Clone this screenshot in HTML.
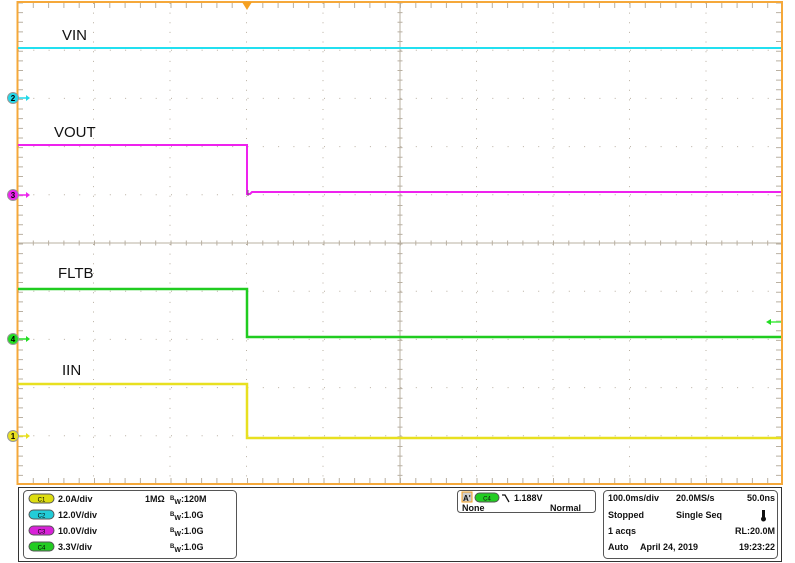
<!DOCTYPE html>
<html><head><meta charset="utf-8"><style>
body{margin:0;width:795px;height:563px;background:#fff;overflow:hidden;font-family:"Liberation Sans",Arial,sans-serif}
</style></head><body>
<svg width="795" height="563" viewBox="0 0 795 563" xmlns="http://www.w3.org/2000/svg" style="position:absolute;left:0;top:0">
<rect width="795" height="563" fill="#fff"/>
<g stroke="#b9b0a2" stroke-width="1">
 <!-- vertical dotted grid -->
 <g stroke-dasharray="1 8.64" stroke-dashoffset="-1">
  <line x1="93.5" y1="2" x2="93.5" y2="484"/><line x1="170" y1="2" x2="170" y2="484"/>
  <line x1="246.5" y1="2" x2="246.5" y2="484"/><line x1="323" y1="2" x2="323" y2="484"/>
  <line x1="476.5" y1="2" x2="476.5" y2="484"/><line x1="553" y1="2" x2="553" y2="484"/>
  <line x1="629.5" y1="2" x2="629.5" y2="484"/><line x1="706" y1="2" x2="706" y2="484"/>
 </g>
 <g stroke-dasharray="1 14.3" stroke-dashoffset="-1">
  <line x1="17" y1="50.2" x2="782" y2="50.2"/><line x1="17" y1="98.4" x2="782" y2="98.4"/>
  <line x1="17" y1="146.6" x2="782" y2="146.6"/><line x1="17" y1="194.8" x2="782" y2="194.8"/>
  <line x1="17" y1="291.2" x2="782" y2="291.2"/><line x1="17" y1="339.4" x2="782" y2="339.4"/>
  <line x1="17" y1="387.6" x2="782" y2="387.6"/><line x1="17" y1="435.8" x2="782" y2="435.8"/>
 </g>
 <!-- center lines -->
 <line x1="17" y1="243" x2="782" y2="243"/>
 <line x1="400" y1="2" x2="400" y2="484"/>
 <line x1="17" y1="243" x2="782" y2="243" stroke-width="5" stroke-dasharray="1 14.3" stroke-dashoffset="-0.5"/>
 <line x1="400" y1="2" x2="400" y2="484" stroke-width="5" stroke-dasharray="1 8.64" stroke-dashoffset="-0.5"/>
 <!-- border ticks -->
 <line x1="17" y1="5" x2="782" y2="5" stroke-width="6" stroke-dasharray="1 14.3" stroke-dashoffset="-0.5"/>
 <line x1="17" y1="481" x2="782" y2="481" stroke-width="6" stroke-dasharray="1 14.3" stroke-dashoffset="-0.5"/>
 <line x1="20" y1="2" x2="20" y2="484" stroke-width="6" stroke-dasharray="1 8.64" stroke-dashoffset="-0.5"/>
 <line x1="779" y1="2" x2="779" y2="484" stroke-width="6" stroke-dasharray="1 8.64" stroke-dashoffset="-0.5"/>
</g>
<rect x="17.5" y="2" width="764.5" height="482" fill="none" stroke="#f5a83a" stroke-width="2"/>
<polygon points="242,2 252,2 247,10" fill="#f5a020"/>
<!-- traces -->
<line x1="18" y1="48" x2="781" y2="48" stroke="#22e0f0" stroke-width="2"/>
<polyline points="18,145 247,145 247,194 250,194 252,192 781,192" fill="none" stroke="#ee22ee" stroke-width="2"/>
<polyline points="18,289 247,289 247,337 781,337" fill="none" stroke="#20cc20" stroke-width="2.5"/>
<polyline points="18,384 247,384 247,438 781,438" fill="none" stroke="#e8e020" stroke-width="2.5"/>
<line x1="248" y1="190" x2="248" y2="196" stroke="#7a4a7a" stroke-width="1"/>
<!-- labels -->
<g font-size="15" fill="#111" font-family="Liberation Sans, Arial, sans-serif">
 <text x="62" y="40">VIN</text><text x="54" y="137">VOUT</text>
 <text x="58" y="278">FLTB</text><text x="62" y="375">IIN</text>
</g>
<!-- markers -->
<g font-size="8" font-weight="bold" text-anchor="middle">
 <line x1="18" y1="98" x2="28" y2="98" stroke="#22d8e8" stroke-width="1.5"/><polygon points="26,95 30,98 26,101" fill="#22d8e8"/>
 <circle cx="13" cy="98" r="5.5" fill="#22d8e8" stroke="#999"/><text x="13" y="101">2</text>
 <line x1="18" y1="195" x2="28" y2="195" stroke="#ee22ee" stroke-width="1.5"/><polygon points="26,192 30,195 26,198" fill="#ee22ee"/>
 <circle cx="13" cy="195" r="5.5" fill="#ee22ee" stroke="#999"/><text x="13" y="198">3</text>
 <line x1="18" y1="339" x2="28" y2="339" stroke="#22dd22" stroke-width="1.5"/><polygon points="26,336 30,339 26,342" fill="#22dd22"/>
 <circle cx="13" cy="339" r="5.5" fill="#22dd22" stroke="#999"/><text x="13" y="342">4</text>
 <line x1="18" y1="436" x2="28" y2="436" stroke="#e8e020" stroke-width="1.5"/><polygon points="26,433 30,436 26,439" fill="#e8e020"/>
 <circle cx="13" cy="436" r="5.5" fill="#e8e020" stroke="#999"/><text x="13" y="439">1</text>
</g>
<line x1="768" y1="322" x2="781" y2="322" stroke="#44ee44" stroke-width="1.5"/><polygon points="766,322 771,319 771,325" fill="#22dd22"/>
<!-- bottom panel -->
<rect x="18.5" y="487.5" width="763" height="74" fill="#fff" stroke="#333" stroke-width="1"/>
<rect x="23.5" y="490.5" width="213" height="68" rx="4" fill="#fff" stroke="#555"/>
<rect x="457.5" y="490.5" width="138" height="22" rx="3" fill="#fff" stroke="#555"/>
<rect x="603.5" y="490.5" width="174" height="68" rx="4" fill="#fff" stroke="#555"/>
<g font-size="8">
 <rect x="29" y="494" width="25" height="9" rx="4.5" fill="#dddd10" stroke="#555"/><text x="41.5" y="501.5" text-anchor="middle" font-size="6">C1</text>
 <rect x="29" y="510" width="25" height="9" rx="4.5" fill="#22ccd8" stroke="#555"/><text x="41.5" y="517.5" text-anchor="middle" font-size="6">C2</text>
 <rect x="29" y="526" width="25" height="9" rx="4.5" fill="#d822d8" stroke="#555"/><text x="41.5" y="533.5" text-anchor="middle" font-size="6">C3</text>
 <rect x="29" y="542" width="25" height="9" rx="4.5" fill="#22cc22" stroke="#555"/><text x="41.5" y="549.5" text-anchor="middle" font-size="6">C4</text>
</g>
<g font-size="9" font-weight="bold" fill="#111">
 <text x="58" y="502">2.0A/div</text><text x="58" y="518">12.0V/div</text>
 <text x="58" y="534">10.0V/div</text><text x="58" y="550">3.3V/div</text>
 <text x="145" y="502">1MΩ</text>
 <text x="170" y="502"><tspan font-size="6" dy="-2">B</tspan><tspan font-size="7" dy="4">W</tspan><tspan dy="-2">:120M</tspan></text>
 <text x="170" y="518"><tspan font-size="6" dy="-2">B</tspan><tspan font-size="7" dy="4">W</tspan><tspan dy="-2">:1.0G</tspan></text>
 <text x="170" y="534"><tspan font-size="6" dy="-2">B</tspan><tspan font-size="7" dy="4">W</tspan><tspan dy="-2">:1.0G</tspan></text>
 <text x="170" y="550"><tspan font-size="6" dy="-2">B</tspan><tspan font-size="7" dy="4">W</tspan><tspan dy="-2">:1.0G</tspan></text>
 <rect x="462" y="492" width="10" height="10" fill="#ccc" stroke="#f5a020"/><text x="463" y="501" font-size="8">A'</text>
 <rect x="475" y="493" width="24" height="9" rx="4.5" fill="#22cc22" stroke="#555"/><text x="487" y="500.5" text-anchor="middle" font-size="6" font-weight="normal">C4</text>
 <path d="M502,495 L505,495 L509,502" fill="none" stroke="#111" stroke-width="1.3"/>
 <text x="514" y="501">1.188V</text>
 <text x="462" y="511">None</text><text x="550" y="511">Normal</text>
 <text x="608" y="501">100.0ms/div</text><text x="676" y="501">20.0MS/s</text><text x="775" y="501" text-anchor="end">50.0ns</text>
 <text x="608" y="518">Stopped</text><text x="676" y="518">Single Seq</text>
 <text x="608" y="534">1 acqs</text><text x="775" y="534" text-anchor="end">RL:20.0M</text>
 <text x="608" y="550">Auto</text><text x="640" y="550">April 24, 2019</text><text x="775" y="550" text-anchor="end">19:23:22</text>
</g>
<rect x="762" y="510" width="3" height="8" fill="#111"/><circle cx="763.5" cy="519" r="2.5" fill="#111"/>
</svg>
</body></html>
